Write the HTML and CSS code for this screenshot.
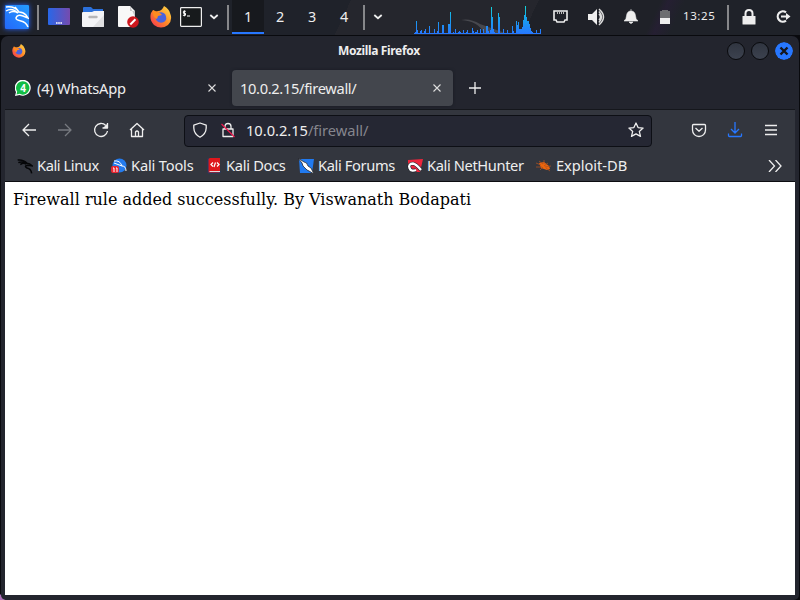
FILE: index.html
```
<!DOCTYPE html>
<html lang="en">
<head>
<meta charset="utf-8">
<title>Mozilla Firefox</title>
<link rel="stylesheet" href="styles.css">
</head>
<body>
<svg class="defs" width="0" height="0">
  <defs>
    <linearGradient id="kaliblue" x1="1" y1="0" x2="0" y2="1"><stop offset="0" stop-color="#249cff"/><stop offset="1" stop-color="#2368fb"/></linearGradient>
    <linearGradient id="desk"><stop offset="0" stop-color="#2867e8"/><stop offset="1" stop-color="#764bae"/></linearGradient>
    <linearGradient id="fire" x1="1" y1="0" x2="0" y2="1"><stop offset="0" stop-color="#ffe34b"/><stop offset=".5" stop-color="#ff8a27"/><stop offset="1" stop-color="#f52c58"/></linearGradient>
    <linearGradient id="load" gradientUnits="userSpaceOnUse" x1="0" y1="6" x2="0" y2="34"><stop offset="0" stop-color="#12d6d8"/><stop offset=".45" stop-color="#18a2ee"/><stop offset="1" stop-color="#2777ff"/></linearGradient>
    <symbol id="dragon" viewBox="0 0 24 24"><path d="M1 3Q10 2 15 8Q19 8 23 12L16 11Q10 12 15 15Q21 16 22 23M2 7Q8 4 14 9M5 10Q9 6 14 9" fill="none" stroke="currentColor" stroke-width="2.3"/></symbol>
    <symbol id="firefox" viewBox="0 0 22 22"><path d="M14 0Q19 3 20 7Q23 14 18 19Q11 24 4 19Q-1 14 1 7L3 4L5 6L8 5Q12 5 14 0Z" fill="url(#fire)"/><path d="M8 7Q12 5 15 8Q18 13 14 16Q9 18 6 14Q5 10 8 7Z" fill="#4a63de"/><path d="M3 4L10 7L12 9L8 10L7 13Q2 11 3 4Z" fill="#ff8b20"/></symbol>
  </defs>
</svg>
<header class="panel">
  <svg class="kali" viewBox="0 0 24 24"><rect width="24" height="24" rx="1" fill="url(#kaliblue)"/><path d="M1 2Q10 1 14 7Q18 7 21 10L23 13L18 11Q12 9 11 13Q11 15 16 16Q21 17 23 22M1 6Q7 2 13 8M4 8Q8 5 13 8M14 7L10 2" fill="none" stroke="#fff" stroke-width="1.5"/></svg>
  <i class="sep s1"></i>
  <svg class="desktop" viewBox="0 0 22 17"><rect width="22" height="17" rx="1" fill="url(#desk)"/><path d="M8 15h1.6m.6 0h1.6m.6 0H14" stroke="#fff" stroke-width="1.5"/></svg>
  <svg class="folder" viewBox="0 0 22 20"><path d="M1 1Q1 0 2 0h7l2 2h10v7H1Z" fill="#2b70db"/><path d="M0 6Q0 5 1 5h9l2-1h10v15q0 1-1 1H1q-1 0-1-1Z" fill="#f4f4f6"/><path d="M11 20L22 8v11q0 1-1 1Z" fill="#e1e1e3"/><path d="M7.5 10h7" stroke="#b5b5b7" stroke-width="2.4" stroke-linecap="round"/></svg>
  <svg class="document" viewBox="0 0 21 22"><path d="M1 0h11l5 5v16H1q-1 0-1-1V1q0-1 1-1Z" fill="#f8f8f8"/><path d="M12 0v5h5v6Z" fill="#c8c8ca"/><circle cx="15" cy="16" r="5.8" fill="#ce171e"/><path d="M12.3 18.5L17.5 13.3" stroke="#fff" stroke-width="2"/></svg>
  <svg class="fox"><use href="#firefox"/></svg>
  <svg class="terminal" viewBox="0 0 22 20"><rect x=".6" y=".6" width="20.8" height="18.8" rx=".8" fill="#171a1c" stroke="#eee" stroke-width="1.2"/><path d="M5.8 4.3H3.4v2h2.1v2H2.9M4.4 3.3v6M7 9h3" fill="none" stroke="#fff" stroke-width="1"/></svg>
  <svg class="chev" viewBox="0 0 10 6"><path d="M1.3 1L5 4.2L8.7 1" fill="none" stroke="#eee" stroke-width="1.8"/></svg>
  <i class="sep s2"></i>
  <nav class="workspaces"><b>1</b><span>2</span><span>3</span><span>4</span></nav>
  <i class="sep s3"></i>
  <svg class="chev second" viewBox="0 0 10 6"><path d="M1.3 1L5 4.2L8.7 1" fill="none" stroke="#eee" stroke-width="1.8"/></svg>
  <svg class="graph" viewBox="414 0 128 35"><path d="M461 20Q470 18 480 24L505 33H484Q478 21 461 20Z" fill="#47484e"/><path fill="none" stroke="url(#load)" d="M414 33.5H541M415.5 34v-2M416.5 34v-13M417.5 34v-4M420.5 34v-3M421.5 34v-4M424.5 34v-3M425.5 34v-5M429.5 34v-8M434.5 34v-5M437.5 34v-3M438.5 34v-12M442.5 34v-9M443.5 34v-9M448.5 34v-10M449.5 34v-10M450.5 34v-22M453.5 34v-2M455.5 34v-5M458.5 34v-2M459.5 34v-3M460.5 34v-2M463.5 34v-4M466.5 34v-2M467.5 34v-4M472.5 34v-6M473.5 34v-3M475.5 34v-2M476.5 34v-2M477.5 34v-4M480.5 34v-5M483.5 34v-5M486.5 34v-8M487.5 34v-8M488.5 34v-3M490.5 34v-4M491.5 34v-27M492.5 34v-17M493.5 34v-5M494.5 34v-2M498.5 34v-21M499.5 34v-17M503.5 34v-5M507.5 34v-4M512.5 34v-8M513.5 34v-3M516.5 34v-13M517.5 34v-9M518.5 34v-12M519.5 34v-5M520.5 34v-5M521.5 34v-5M522.5 34v-7M523.5 34v-14M524.5 34v-19M525.5 34v-28M526.5 34v-17M527.5 34v-13M528.5 34v-13M529.5 34v-10M530.5 34v-6M531.5 34v-3M532.5 34v-2M536.5 34v-4M540.5 34v-5"/></svg>
  <svg class="ethernet" viewBox="0 0 15 13"><path d="M1 1h13v9h-2l-1 2H4l-1-2H1Z" fill="none" stroke="#eee" stroke-width="1.600"/><path d="M4.500 2v2m2-2v2m2-2v2m2-2v2" stroke="#bbb"/></svg>
  <svg class="speaker" viewBox="0 0 18 18"><path d="M0 6h4l5-5v16l-5-5H0Z" fill="#eee"/><path d="M11 6q3 3 0 6M11 3.500q5 5.500 0 11M11 1q9 8 0 16" fill="none" stroke="#ddd" stroke-width="1.500"/></svg>
  <svg class="bell" viewBox="0 0 14 15"><path d="M7 0v2Q11 2 11.500 7Q11.500 10 14 12H0Q2.500 10 2.500 7Q3 2 7 2M5 13h4q-2 3-4 0" fill="#eee" stroke="#eee" stroke-width=".6"/></svg>
  <svg class="battery" viewBox="0 0 10 14"><path d="M0 1h2V0h6v1h2v7H0Z" fill="#6d6e70"/><path d="M0 8h10v6H0Z" fill="#eee"/></svg>
  <time>13:25</time>
  <i class="sep s4"></i>
  <svg class="padlock" viewBox="0 0 14 16"><path d="M3.500 8V4.500q0-3.500 3.500-3.500t3.500 3.500V8" fill="none" stroke="#eee" stroke-width="2"/><rect y="7" x=".5" width="13" height="8.500" rx=".5" fill="#eee"/></svg>
  <svg class="logout" viewBox="0 0 15 13"><path d="M10 2.300A5.200 5.200 0 1 0 10 10.700M5 6.500h6" fill="none" stroke="#eee" stroke-width="2.200"/><path d="M10 3l4.500 3.500L10 10Z" fill="#eee"/></svg>
</header>
<main class="window">
  <div class="titlebar">
    <svg class="titlefox" viewBox="0 0 22 22"><use href="#firefox"/></svg><h1>Mozilla Firefox</h1>
    <div class="controls"><i></i><i></i><svg viewBox="0 0 18 18"><circle cx="9" cy="9" r="9" fill="#2777ff"/><path d="M5.500 5.500l7 7m0-7l-7 7" stroke="#15161c" stroke-width="2.400"/></svg></div>
  </div>
  <div class="tabs">
    <div class="tab first"><svg class="whatsapp" viewBox="0 0 16 16"><path d="M0 16L1 12A8 8 0 1 1 4.500 15Z" fill="#fff"/><path d="M1.500 14.500L2.200 11.700A6.700 6.700 0 1 1 4.500 13.800Z" fill="#12bd45"/><text x="8" y="11.600" text-anchor="middle">4</text></svg><span class="label wa">(4) WhatsApp</span><svg class="close" viewBox="0 0 8 8"><path d="M.5.500l7 7m0-7l-7 7" stroke="#ddd" stroke-width="1.100"/></svg></div>
    <div class="tab active"><span class="label url-label">10.0.2.15/firewall/</span><svg class="close" viewBox="0 0 8 8"><path d="M.5.500l7 7m0-7l-7 7" stroke="#ddd" stroke-width="1.100"/></svg></div>
    <svg class="plus" viewBox="0 0 12 12"><path d="M6 0v12M0 6h12" stroke="#eee" stroke-width="1.300"/></svg>
  </div>
  <div class="browser">
    <div class="toolbar">
      <svg class="tool back" viewBox="0 0 16 16"><path d="M15 8H2m6-6L2 8l6 6" /></svg>
      <svg class="tool forward" viewBox="0 0 16 16"><path d="M1 8h13M8 2l6 6l-6 6"/></svg>
      <svg class="tool reload" viewBox="0 0 16 16"><path d="M12.800 3.500A6.500 6.500 0 1 0 14.500 9M14.500 1v5h-5"/><path d="M10 6h4.500V1.500Z" fill="#eee" stroke="none"/></svg>
      <svg class="tool home" viewBox="0 0 16 16"><path d="M1 8L8 1.500L15 8M2.500 7v7.500h11V7M6.500 14v-4q1.500-2 3 0v4"/></svg>
      <div class="address">
        <svg class="tool" viewBox="0 0 16 16"><path d="M8 1L14.200 3.200V6Q14 12 8 15.200Q2 12 1.800 6V3.200Z"/></svg>
        <svg class="tool lock" viewBox="0 0 16 16"><path d="M5 7V4.500q0-3 3-3t3 3V7M3 7h10v7.500H3Z"/><path d="M1.500 2L14.500 15" stroke="#ed184e"/></svg>
        <span class="label address-text">10.0.2.15<em>/firewall/</em></span>
        <svg class="tool star" viewBox="0 0 16 16"><path d="M8 1l2.100 4.600l5 .5l-3.800 3.300l1.200 5L8 11.900l-4.500 2.500l1.200-5L.9 6.100l5-.5Z"/></svg>
      </div>
      <svg class="tool pocket" viewBox="0 0 16 16"><path d="M2.500 2.500h11q1 0 1 1V8a6.500 6.500 0 0 1-13 0V3.500q0-1 1-1ZM4.500 6L8 9.300L11.500 6"/></svg>
      <svg class="tool download" viewBox="0 0 16 16"><path d="M8 0v11M4 7l4 4l4-4M1.500 11.500v2q0 1 1 1h11q1 0 1-1v-2"/></svg>
      <svg class="tool menu" viewBox="0 0 16 16"><path d="M2 3.500h12M2 8h12M2 12.500h12"/></svg>
    </div>
    <div class="bookmarks">
      <a class="b1"><svg class="black"><use href="#dragon"/></svg><span>Kali Linux</span></a>
      <a class="b2"><svg viewBox="0 0 16 16"><circle cx="8.500" cy="7.500" r="7" fill="#247bed"/><path d="M3 3q6-1 8 5q4 0 4 5M3 5l8 3" stroke="#fff" fill="none"/><rect y="8" width="8" height="7" rx="2" fill="#e82631"/><path d="M2 10h1v4m2-4h1v4" stroke="#fff" fill="none"/></svg><span>Kali Tools</span></a>
      <a class="b3"><svg viewBox="0 0 16 16"><path d="M2 1L4 0h10v15H2Z" fill="#df171c"/><path d="M2 0v15h12v-2" fill="none" stroke="#233b69" stroke-width="1"/><path d="M3.500 13.500H14" stroke="#ddd"/><path d="M7 4.500L5 6.500l2 2m2.500-4L8 9m3-4.500l2 2l-2 2" fill="none" stroke="#fff" stroke-width="1.200"/></svg><span>Kali Docs</span></a>
      <a class="b4"><svg viewBox="0 0 16 16"><path d="M1 1h15l-2 14H2Z" fill="#217af0"/><path d="M0 0L6 4Q9 4 10 8l3 2l3 6l-5-3l-2-1l-4-4L4 5Z" fill="#fff" stroke="#26282e" stroke-width=".8"/></svg><span>Kali Forums</span></a>
      <a class="b5"><svg viewBox="0 0 16 16"><path d="M1 2L16 1l-3 13H6L1 7Z" fill="#ed263c"/><path d="M2.500 10Q1 6 6 5.500Q9 6 14 12M2.500 10Q4 14 9 12" stroke="#20252c" stroke-width="3.600" fill="none"/><path d="M2.500 10Q1 6 6 5.500Q9 6 14 12M2.500 10Q4 14 9 12" stroke="#fff" stroke-width="2.300" fill="none"/></svg><span>Kali NetHunter</span></a>
      <a class="b6"><svg viewBox="0 0 16 16"><path d="M3 5L8 4l5 4l1 3l-3 1l-6-2Z" fill="#ee650b"/><path d="M0 5l5 2M3 3l4 3M8 2v4M12 5l-4 3M0 9h6M4 12l3-3M15 8l-6 1M14 13l-4-3" stroke="#a95223" stroke-width=".8"/></svg><span>Exploit-DB</span></a>
      <svg class="overflow" viewBox="0 0 14 12"><path d="M1 0l5.500 6L1 12M7.500 0L13 6l-5.500 6" fill="none" stroke="#eee" stroke-width="1.300"/></svg>
    </div>
    <div class="content">Firewall rule added successfully. By Viswanath Bodapati</div>
  </div>
</main>
</body>
</html>
```
FILE: styles.css
```
* { box-sizing: border-box; }
body { margin: 0; width: 800px; height: 600px; overflow: hidden; background: radial-gradient(circle at 0 600px, #ad70b8 0 5px, transparent 6px), #090a0e; color: #eee; font-family: "Noto Sans", sans-serif; }
svg { display: block; flex: none; }
.defs { position: absolute; }
.panel { height: 35px; display: flex; align-items: flex-start; background: linear-gradient(115deg, #1f222a 0 43%, #25262d 43% 66%, #1f2128 66% 81%, #251f32 82%, #1f2229 84%); }
.kali { width: 24px; height: 24px; margin: 5px 0 0 5px; box-shadow: 0 0 5px #2863ff; }
.sep { width: 2px; height: 25px; margin-top: 5px; background: #86878a; flex: none; }
.s1 { margin-left: 8px; }
.desktop { width: 22px; height: 17px; margin: 8px 0 0 9px; }
.folder { width: 22px; height: 20px; margin: 7px 0 0 12px; }
.document { width: 21px; height: 22px; margin: 6px 0 0 14px; }
.fox { width: 22px; height: 22px; margin: 6px 0 0 11px; }
.terminal { width: 22px; height: 20px; margin: 7px 0 0 8px; }
.chev { width: 10px; height: 6px; margin: 14px 0 0 7px; }
.s2 { margin-left: 8px; }
.workspaces { display: flex; margin-left: 3px; height: 34px; font-size: 14.4px; line-height: 33px; }
.workspaces b, .workspaces span { width: 32px; text-align: center; font-weight: 400; }
.workspaces b { background: #17191e; border-bottom: 2px solid #2777ff; }
.s3 { margin-left: 3px; }
.second { margin-left: 8px; }
.graph { width: 128px; height: 35px; margin-left: 31px; }
.ethernet { width: 15px; height: 13px; margin: 10px 0 0 11px; }
.speaker { width: 18px; height: 18px; margin: 8px 0 0 20px; }
.bell { width: 14px; height: 15px; margin: 9px 0 0 18px; }
.battery { width: 10px; height: 14px; margin: 10px 0 0 22px; }
time { width: 44px; padding-left: 13px; font-size: 11.5px; line-height: 32px; letter-spacing: .6px; }
.s4 { margin-left: 13px; }
.padlock { width: 14px; height: 16px; margin: 9px 0 0 13px; }
.logout { width: 15px; height: 13px; margin: 10px 0 0 20px; }
.window { height: 564px; margin: 1px 0 0 1px; width: 798px; border-radius: 7px 7px 5px 5px; background: #23252e; overflow: hidden; padding: 0 3px 5px 4px; }
.titlebar { height: 30px; display: flex; align-items: center; }
.titlefox { width: 14px; height: 14px; margin-left: 7px; }
h1 { flex: 1; margin: 0; padding-left: 312px; font-size: 12px; line-height: 30px; letter-spacing: -.35px; }
.controls { display: flex; gap: 6px; margin-right: 3px; }
.controls i, .controls svg { width: 18px; height: 18px; border-radius: 50%; }
.controls i { background: linear-gradient(#303540, #3c424f); border: 1px solid #090a0d; }
.tabs { height: 43px; display: flex; align-items: center; }
.tab { display: flex; align-items: center; height: 36px; border-radius: 4px; }
.first { width: 220px; padding: 0 9px 0 10px; }
.whatsapp { width: 16px; height: 16px; margin-right: 6px; }
.whatsapp text { fill: #fff; font-size: 10px; font-weight: 700; }
.label { font-size: 14.67px; line-height: 20px; white-space: nowrap; }
.wa { letter-spacing: -.24px; }
.url-label { letter-spacing: -.34px; }
.close { width: 8px; height: 8px; margin-left: auto; }
.active { width: 221px; margin-left: 7px; padding: 0 12px 0 8px; background: #43464d; box-shadow: 0 0 3px #191b23; }
.plus { width: 12px; height: 12px; margin-left: 16px; }
.browser { width: 790px; height: 486px; background: #fff; }
.toolbar { height: 42px; display: flex; align-items: center; background: #33363e; border-top: 1px solid #15171c; padding-left: 16px; }
.tool { width: 16px; height: 16px; margin-bottom: 1px; fill: none; stroke: #eee; stroke-width: 1.3; stroke-linejoin: round; }
.forward { stroke: #777a80; }
.forward, .reload, .home { margin-left: 20px; }
.address { width: 468px; height: 32px; margin-left: 39px; border: 1px solid #0d0f15; border-radius: 4px; background: #252733; display: flex; align-items: center; padding: 0 7px; }
.lock { margin-left: 12px; }
.address-text { margin: 0 0 2px 10px; letter-spacing: -.02px; }
em { font-style: normal; color: #85868e; }
.star { margin-left: auto; }
.pocket { margin-left: 39px; }
.download, .menu { margin-left: 20px; }
.download { stroke: #2777ff; }
.bookmarks { height: 31px; display: flex; align-items: center; background: #33363e; border-bottom: 1px solid #0c0d11; padding-bottom: 1px; }
.bookmarks a { display: flex; align-items: center; font-size: 14.67px; line-height: 20px; white-space: nowrap; flex: none; }
.bookmarks a svg { width: 16px; height: 16px; margin-right: 4px; }
.bookmarks span { padding-bottom: 1px; }
.b1 { width: 94px; margin-left: 12px; letter-spacing: -.42px; }
.b2 { width: 95px; letter-spacing: -.18px; }
.b3 { width: 92px; letter-spacing: -.3px; }
.b4 { width: 109px; letter-spacing: -.36px; }
.b5 { width: 129px; letter-spacing: -.38px; }
.b6 { width: 94px; letter-spacing: -.04px; }
.black { color: #050608; }
.overflow { width: 14px; height: 12px; margin-left: 138px; }
.content { padding: 8px; color: #000; font: 16px/19px "DejaVu Serif", serif; }
```
